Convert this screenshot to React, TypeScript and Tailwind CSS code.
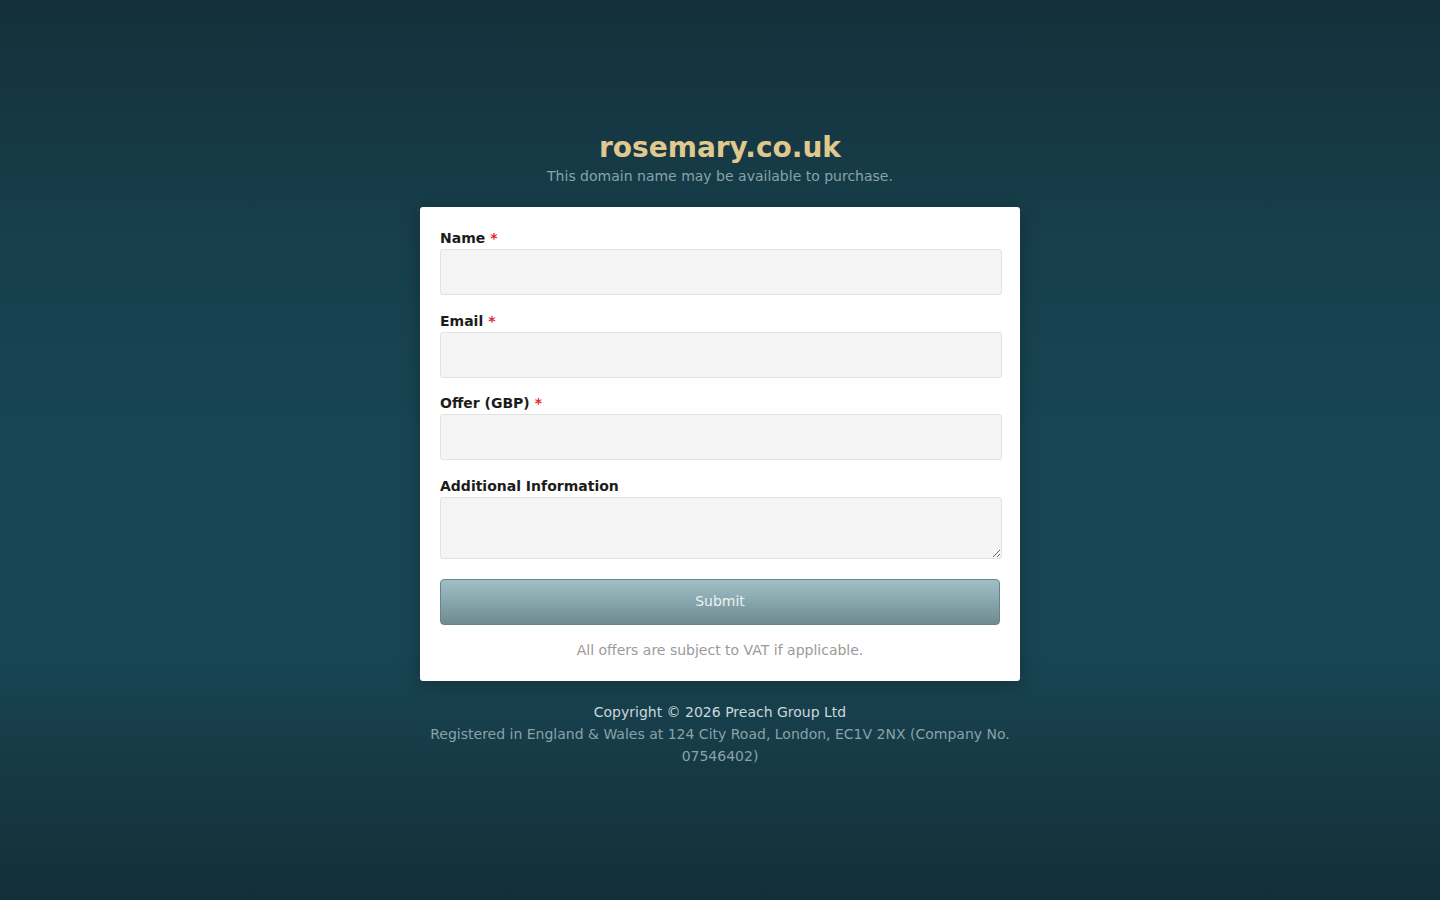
import React from "react";

function Field({ label, required, textarea }: { label: string; required?: boolean; textarea?: boolean }) {
  return (
    <div className="flex flex-col">
      <label className="block text-[14px] leading-[21px] font-bold text-[#1c1c1c]">
        {label}
        {required && <span className="text-[#e5262b] ml-[5px]">*</span>}
      </label>
      {textarea ? (
        <textarea className="w-[562px] h-[62px] bg-[#f5f5f5] border border-[#e2e2e2] rounded-[3px] outline-none block" />
      ) : (
        <input className="w-[562px] h-[46px] bg-[#f5f5f5] border border-[#e2e2e2] rounded-[3px] outline-none block" />
      )}
    </div>
  );
}

export default function App() {
  return (
    <div
      className="min-h-screen w-full flex flex-col items-center pt-[131px] bg-[linear-gradient(to_bottom,#13303a_0%,#173e4b_25%,#184654_50%,#184654_72%,#163a45_85%,#132f38_100%)]"
      style={{ fontFamily: '"DejaVu Sans", sans-serif', height: 900 }}
    >
      <h1 className="text-[28px] leading-[34px] font-bold text-[#e0c98c]">rosemary.co.uk</h1>
      <p className="text-[14px] leading-[22px] text-[#86a3ab] mt-[0px]">
        This domain name may be available to purchase.
      </p>
      <div className="mt-[20px] w-[600px] bg-white rounded-[3px] shadow-[0_4px_20px_rgba(0,0,0,0.25)] px-[20px] pt-[21px] pb-[21px] flex flex-col">
        <div className="flex flex-col gap-[15.5px]">
          <Field label="Name" required />
          <Field label="Email" required />
          <Field label="Offer (GBP)" required />
          <Field label="Additional Information" textarea />
        </div>
        <button className="mt-[20px] w-[560px] h-[46px] rounded-[4px] border border-[#6a8388] bg-[linear-gradient(to_bottom,#a0bfc7,#6f8b91)] text-[14px] text-[#eaf2f4]">
          Submit
        </button>
        <p className="mt-[15px] text-center text-[14px] leading-[20px] text-[#9a9a9a]">
          All offers are subject to VAT if applicable.
        </p>
      </div>
      <div className="mt-[20px] w-[600px] text-center">
        <p className="text-[14px] leading-[22px] text-[#c9d7db]">Copyright © 2026 Preach Group Ltd</p>
        <p className="text-[14px] leading-[22px] text-[#88a3aa]">
          Registered in England &amp; Wales at 124 City Road, London, EC1V 2NX (Company No. 07546402)
        </p>
      </div>
    </div>
  );
}
